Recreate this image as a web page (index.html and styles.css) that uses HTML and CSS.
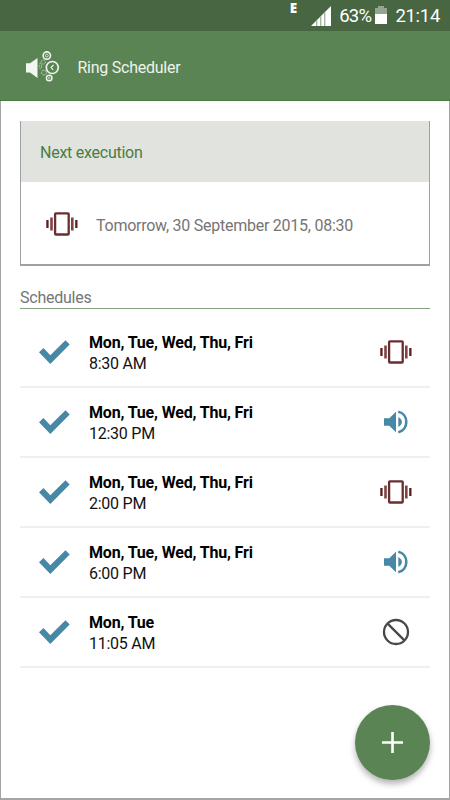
FILE: index.html
```html
<!DOCTYPE html>
<html lang="en">
<head>
    <meta charset="UTF-8">
    <meta name="viewport" content="width=device-width, initial-scale=1.0">
    <title>Ring Scheduler</title>
    <link rel="stylesheet" href="styles.css">
</head>
<body>
    <!-- Shared icons -->
    <svg class="sprite" width="0" height="0">
        <symbol id="icon-check" viewBox="0 0 32 26">
            <path d="M1 13.3 5.5 9 12.3 16.2 27.5 1.3 31.7 5.6 12.3 25z"/>
        </symbol>
        <symbol id="icon-vibrate" viewBox="0 0 32 24">
            <rect x="9.1" y="1.3" width="13.6" height="21.2" rx=".8" fill="none" stroke="#692f2f" stroke-width="2.3"/>
            <path d="M4.2 5.4h2.6v13H4.2zM25 5.4h2.6v13H25z" fill="#7d4646"/>
            <path d="M.3 8h2.3v8H.3zM29.2 8h2.3v8h-2.3z" fill="#5f1a1a"/>
        </symbol>
        <symbol id="icon-sound" viewBox="0 0 24 24">
            <path d="M0 8.2h5.3L12 1.8v20.4l-6.7-6.4H0z"/>
            <path d="M14.3 7.2c2.2.9 3.6 2.7 3.6 4.8s-1.4 3.9-3.6 4.8z"/>
            <path d="M14.3 1.8c4.8 1 8 5.1 8 10.2s-3.2 9.2-8 10.2" fill="none" stroke="currentColor" stroke-width="2.6"/>
        </symbol>
        <symbol id="icon-block" viewBox="0 0 28 28">
            <path d="M5.6 5.6 22.4 22.4" fill="none" stroke="currentColor" stroke-width="2.3"/>
            <circle cx="14" cy="14" r="12" fill="none" stroke="currentColor" stroke-width="2.3"/>
        </symbol>
    </svg>

    <div class="status-bar">
        <span class="network">E</span>
        <svg class="signal" width="20" height="20" viewBox="0 0 20 20">
            <path d="M0 20 20 0v20z" fill="#fff"/>
            <path d="M5.7 14.3V20M9.7 10.3V20M13.7 6.3V20" stroke="#a5b5a0" stroke-width="1.4"/>
        </svg>
        <span class="percent">63%</span>
        <svg class="battery" width="12" height="18" viewBox="0 0 12 18">
            <path d="M3 0h6v2h3v7H0V2h3z" fill="#92a68d"/>
            <path d="M0 8h12v10H0z" fill="#fff"/>
        </svg>
        <span class="clock">21:14</span>
    </div>

    <header class="app-bar">
        <svg class="logo" width="34" height="32" viewBox="0 0 34 32">
            <path d="M0 12.3h4L11.5 7v20L4 21.5H0z" fill="#f3f7f2"/>
            <g fill="none" stroke="#eef4ed">
                <circle cx="20.8" cy="4.6" r="3.7" stroke-width="1.6"/>
                <circle cx="20.8" cy="4.6" r="1.4" stroke-width=".8"/>
                <circle cx="26.3" cy="16.5" r="6" stroke-width="1.7"/>
                <path d="M27.5 14 25 16.5l2.2 2.3" stroke-width="1.1"/>
                <circle cx="23.2" cy="27" r="2.8" stroke-width="1.4"/>
                <circle cx="23.2" cy="27" r=".9" stroke-width=".6"/>
                <g stroke-opacity=".7">
                    <circle cx="17.3" cy="11" r="2.1" stroke-width=".8" stroke-dasharray="2 .8"/>
                    <ellipse cx="14.4" cy="15" rx="1.2" ry="2.8" stroke-width=".8" stroke-dasharray="2 .8"/>
                    <circle cx="18" cy="21.6" r="2.4" stroke-width="1" stroke-dasharray="2 .8"/>
                </g>
            </g>
        </svg>
        <h1>Ring Scheduler</h1>
    </header>

    <main class="content">
        <section class="card">
            <h2 class="card-title">Next execution</h2>
            <div class="card-body">
                <svg class="vibrate"><use href="#icon-vibrate"/></svg>
                <span>Tomorrow, 30 September 2015, 08:30</span>
            </div>
        </section>

        <h2 class="list-title">Schedules</h2>
        <ul class="schedules">
            <li>
                <svg class="check"><use href="#icon-check"/></svg>
                <div class="info"><strong>Mon, Tue, Wed, Thu, Fri</strong><span>8:30 AM</span></div>
                <div class="mode"><svg class="vibrate"><use href="#icon-vibrate"/></svg></div>
            </li>
            <li>
                <svg class="check"><use href="#icon-check"/></svg>
                <div class="info"><strong>Mon, Tue, Wed, Thu, Fri</strong><span>12:30 PM</span></div>
                <div class="mode"><svg class="sound"><use href="#icon-sound"/></svg></div>
            </li>
            <li>
                <svg class="check"><use href="#icon-check"/></svg>
                <div class="info"><strong>Mon, Tue, Wed, Thu, Fri</strong><span>2:00 PM</span></div>
                <div class="mode"><svg class="vibrate"><use href="#icon-vibrate"/></svg></div>
            </li>
            <li>
                <svg class="check"><use href="#icon-check"/></svg>
                <div class="info"><strong>Mon, Tue, Wed, Thu, Fri</strong><span>6:00 PM</span></div>
                <div class="mode"><svg class="sound"><use href="#icon-sound"/></svg></div>
            </li>
            <li>
                <svg class="check"><use href="#icon-check"/></svg>
                <div class="info"><strong>Mon, Tue</strong><span>11:05 AM</span></div>
                <div class="mode"><svg class="block"><use href="#icon-block"/></svg></div>
            </li>
        </ul>
    </main>

    <button class="fab" aria-label="Add schedule">
        <svg width="21" height="21" viewBox="0 0 21 21">
            <path d="M10.5 0v21M0 10.5h21" stroke="#fff" stroke-width="2.6"/>
        </svg>
    </button>
</body>
</html>
```
FILE: styles.css
```css
* {
    box-sizing: border-box;
}

body {
    margin: 0;
    height: 800px;
    display: flex;
    flex-direction: column;
    font-family: Roboto, sans-serif;
    font-size: 16px;
    letter-spacing: -0.25px;
    background-color: #fff;
    overflow: hidden;
}

h1, h2, ul {
    margin: 0;
    padding: 0;
    font-weight: normal;
}

svg {
    display: block;
    flex-shrink: 0;
}

.sprite {
    position: absolute;
}

.status-bar {
    height: 31px;
    flex-shrink: 0;
    display: flex;
    justify-content: flex-end;
    align-items: center;
    padding: 1px 10px 0 0;
    background-color: #486641;
    color: #fff;
    font-size: 18.5px;
}

.network {
    align-self: flex-start;
    font-family: "Open Sans", sans-serif;
    font-size: 13.5px;
    font-weight: 800;
    line-height: 14px;
    letter-spacing: 0;
    margin-right: 14px;
}

.percent {
    margin: 0 4px 0 8px;
    letter-spacing: -0.7px;
}

.battery {
    margin-bottom: 2px;
}

.clock {
    margin-left: 8px;
    letter-spacing: -0.3px;
}

.app-bar {
    height: 70px;
    flex-shrink: 0;
    display: flex;
    align-items: center;
    padding: 3px 26px 0;
    background-color: #5a8454;
    border-bottom: 1px solid #437a39;
}

.app-bar h1 {
    margin-left: 17.5px;
    font-size: 16px;
    color: #eef3ed;
}

.content {
    flex: 1;
    padding: 20px 19px 0;
    border: solid #a5a5a5;
    border-width: 0 1px 2px;
}

.card {
    height: 145px;
    border: solid #a0a0a0;
    border-width: 0 1px 2px;
}

.card-title {
    height: 61px;
    padding: 1px 19px 0;
    line-height: 61px;
    font-size: 16px;
    color: #4a7d42;
    background-color: #e0e3de;
}

.card-body {
    height: 82px;
    display: flex;
    align-items: center;
    padding: 2px 25px 0;
    color: #757575;
}

.card-body span {
    margin-left: 18px;
    padding-top: 3px;
}

.list-title {
    height: 43px;
    padding-top: 21px;
    line-height: 21px;
    font-size: 16px;
    color: #757575;
    border-bottom: 1px solid #84a27f;
}

.schedules {
    list-style: none;
    padding-top: 9px;
}

.schedules li {
    height: 70px;
    display: flex;
    align-items: center;
    padding: 0 17px 0 18px;
    border-bottom: 2px solid #efefef;
}

.info {
    flex: 1;
    display: flex;
    flex-direction: column;
    margin-left: 19px;
    padding-top: 2px;
    line-height: 21px;
    color: #111;
}

.info strong {
    letter-spacing: -0.17px;
    color: #000;
}

.mode {
    width: 34px;
    display: flex;
    justify-content: center;
}

.check {
    width: 32px;
    height: 26px;
    fill: #4788a7;
}

.vibrate {
    width: 32px;
    height: 24px;
}

.sound {
    width: 24px;
    height: 24px;
    color: #4788a7;
    fill: #4788a7;
}

.block {
    width: 28px;
    height: 28px;
    color: #484848;
}

.fab {
    position: absolute;
    left: 355px;
    top: 705px;
    width: 75px;
    height: 75px;
    display: flex;
    align-items: center;
    justify-content: center;
    padding: 0;
    border: none;
    border-radius: 50%;
    background-color: #5a8454;
    box-shadow: 0 4px 6px rgba(0, 0, 0, 0.3);
}
```
